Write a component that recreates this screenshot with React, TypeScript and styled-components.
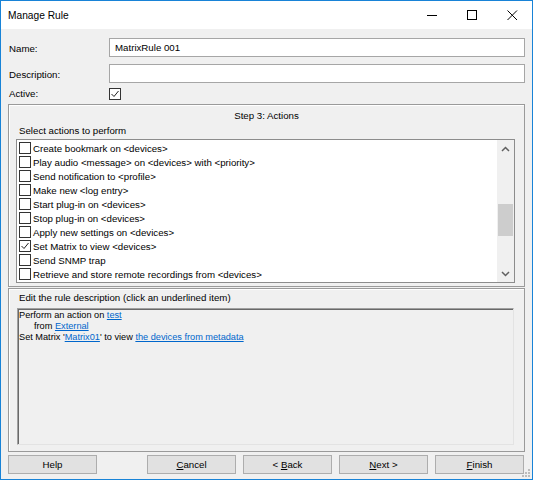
import React from "react";
import styled, { createGlobalStyle } from "styled-components";

const Global = createGlobalStyle`
  html, body { margin: 0; padding: 0; background: #ffffff; }
  body { font-family: "Liberation Sans", Arial, sans-serif; font-size: 9.7px; color: #000; }
  * { box-sizing: border-box; }
`;

const Window = styled.div`
  position: relative;
  width: 533px;
  height: 480px;
  border: 1px solid #1883d7;
  background: #f0f0f0;
  display: flex;
  flex-direction: column;
`;

const TitleBar = styled.div`
  height: 28px;
  background: #ffffff;
  display: flex;
  align-items: center;
  padding-left: 7px;
  flex-shrink: 0;
`;

const Title = styled.div`
  font-size: 10.2px;
  flex: 1;
`;

const Controls = styled.div`
  display: flex;
  height: 100%;
`;

const CtrlBtn = styled.div`
  width: 40px;
  height: 100%;
  display: flex;
  align-items: center;
  justify-content: center;
`;

const Body = styled.div`
  flex: 1;
  display: flex;
  flex-direction: column;
  padding: 9px 7px 0 7px;
`;

const FormRow = styled.div<{ $h: number; $mt: number }>`
  display: grid;
  grid-template-columns: 101px 1fr;
  height: ${(p) => p.$h}px;
  margin-top: ${(p) => p.$mt}px;
  align-items: center;
  flex-shrink: 0;
`;

const Label = styled.div<{ $shift?: number }>`
  padding-left: 1px;
  padding-top: ${(p) => p.$shift ?? 3}px;
  line-height: 12px;
`;

const TextInput = styled.div`
  height: 19px;
  background: #ffffff;
  border: 1px solid #a6a6a6;
  padding: 0 5px;
  display: flex;
  align-items: center;
`;

const Box = styled.div<{ $checked?: boolean }>`
  width: 12px;
  height: 12px;
  border: 1px solid #333333;
  background: #ffffff;
  display: flex;
  align-items: center;
  justify-content: center;
  flex-shrink: 0;
`;

const Group = styled.div<{ $h: number; $mt: number }>`
  height: ${(p) => p.$h}px;
  margin-top: ${(p) => p.$mt}px;
  border: 1px solid #9a9a9a;
  box-shadow: inset 1px 1px 0 #ffffff;
  display: flex;
  flex-direction: column;
  flex-shrink: 0;
`;

const GroupTitle = styled.div`
  text-align: center;
  height: 19px;
  line-height: 12px;
  padding-top: 5px;
`;

const SubTitle = styled.div<{ $h: number; $pt: number }>`
  padding-left: 10px;
  height: ${(p) => p.$h}px;
  padding-top: ${(p) => p.$pt}px;
  line-height: 12px;
`;

const ListBox = styled.div`
  margin: 0 9px 3px 7px;
  flex: 1;
  background: #ffffff;
  border: 1px solid #8c8c8c;
  display: flex;
  overflow: hidden;
`;

const Items = styled.div`
  flex: 1;
  padding: 1px 0 0 2px;
  display: flex;
  flex-direction: column;
`;

const Item = styled.div`
  height: 14px;
  display: flex;
  align-items: center;
  gap: 2px;
  white-space: nowrap;
`;

const ScrollBar = styled.div`
  width: 17px;
  background: #f0f0f0;
  display: flex;
  flex-direction: column;
`;

const Arrow = styled.div`
  height: 17px;
  display: flex;
  align-items: center;
  justify-content: center;
`;

const Track = styled.div`
  flex: 1;
  display: flex;
  flex-direction: column;
  padding: 0 1px;
`;

const Thumb = styled.div<{ $top: number; $h: number }>`
  margin-top: ${(p) => p.$top}px;
  height: ${(p) => p.$h}px;
  background: #cdcdcd;
`;

const DescArea = styled.div`
  margin: 0 10px 6px 8px;
  flex: 1;
  border: 1px solid #a0a0a0;
  border-right-color: #e3e3e3;
  border-bottom-color: #e3e3e3;
  box-shadow: inset 1px 1px 0 #696969;
  padding: 1px 1px;
  font-size: 9.2px;
  line-height: 11px;
`;

const Line = styled.div<{ $indent?: number }>`
  padding-left: ${(p) => p.$indent ?? 0}px;
  white-space: nowrap;
`;

const Link = styled.span`
  color: #0066cc;
  text-decoration: underline;
`;

const ButtonRow = styled.div`
  display: flex;
  gap: 7px;
  padding-top: 3px;
`;

const Button = styled.div<{ $gapAfter?: number }>`
  width: 89px;
  height: 19px;
  background: #e1e1e1;
  border: 1px solid #adadad;
  display: flex;
  align-items: center;
  justify-content: center;
  white-space: pre;
  margin-right: ${(p) => p.$gapAfter ?? 0}px;
`;

const Grip = styled.svg`
  position: absolute;
  right: 1px;
  bottom: 1px;
`;

const Check = () => (
  <svg width="10" height="10" viewBox="0 0 10 10">
    <path d="M1.5 5 L4 7.5 L8.5 2" fill="none" stroke="#222" strokeWidth="1" />
  </svg>
);

const CheckBox = ({ checked }: { checked?: boolean }) => (
  <Box $checked={checked}>{checked ? <Check /> : null}</Box>
);

const actions: { text: string; checked?: boolean }[] = [
  { text: "Create bookmark on <devices>" },
  { text: "Play audio <message> on <devices> with <priority>" },
  { text: "Send notification to <profile>" },
  { text: "Make new <log entry>" },
  { text: "Start plug-in on <devices>" },
  { text: "Stop plug-in on <devices>" },
  { text: "Apply new settings on <devices>" },
  { text: "Set Matrix to view <devices>", checked: true },
  { text: "Send SNMP trap" },
  { text: "Retrieve and store remote recordings from <devices>" },
];

export default function App() {
  return (
    <>
      <Global />
      <Window>
        <TitleBar>
          <Title>Manage Rule</Title>
          <Controls>
            <CtrlBtn>
              <svg width="11" height="11" viewBox="0 0 11 11">
                <path d="M0 5.5 H10" stroke="#000" strokeWidth="1" />
              </svg>
            </CtrlBtn>
            <CtrlBtn>
              <svg width="11" height="11" viewBox="0 0 11 11">
                <rect x="0.5" y="0.5" width="9" height="9" fill="none" stroke="#000" strokeWidth="1" />
              </svg>
            </CtrlBtn>
            <CtrlBtn>
              <svg width="11" height="11" viewBox="0 0 11 11">
                <path d="M0.5 0.5 L10 10 M10 0.5 L0.5 10" stroke="#000" strokeWidth="1" />
              </svg>
            </CtrlBtn>
          </Controls>
        </TitleBar>
        <Body>
          <FormRow $h={19} $mt={0}>
            <Label>Name:</Label>
            <TextInput>MatrixRule 001</TextInput>
          </FormRow>
          <FormRow $h={19} $mt={7}>
            <Label>Description:</Label>
            <TextInput />
          </FormRow>
          <FormRow $h={12} $mt={4}>
            <Label $shift={1}>Active:</Label>
            <CheckBox checked />
          </FormRow>
          <Group $h={183} $mt={5}>
            <GroupTitle>Step 3: Actions</GroupTitle>
            <SubTitle $h={15} $pt={1}>
              Select actions to perform
            </SubTitle>
            <ListBox>
              <Items>
                {actions.map((a) => (
                  <Item key={a.text}>
                    <CheckBox checked={a.checked} />
                    <span>{a.text}</span>
                  </Item>
                ))}
              </Items>
              <ScrollBar>
                <Arrow>
                  <svg width="9" height="6" viewBox="0 0 9 6">
                    <path d="M1 5 L4.5 1.5 L8 5" fill="none" stroke="#606060" strokeWidth="1.5" />
                  </svg>
                </Arrow>
                <Track>
                  <Thumb $top={47} $h={32} />
                </Track>
                <Arrow>
                  <svg width="9" height="6" viewBox="0 0 9 6">
                    <path d="M1 1 L4.5 4.5 L8 1" fill="none" stroke="#606060" strokeWidth="1.5" />
                  </svg>
                </Arrow>
              </ScrollBar>
            </ListBox>
          </Group>
          <Group $h={164} $mt={1}>
            <SubTitle $h={19} $pt={3}>
              Edit the rule description (click an underlined item)
            </SubTitle>
            <DescArea>
              <Line>
                Perform an action on <Link>test</Link>
              </Line>
              <Line $indent={15}>
                from <Link>External</Link>
              </Line>
              <Line>
                Set Matrix '<Link>Matrix01</Link>' to view <Link>the devices from metadata</Link>
              </Line>
            </DescArea>
          </Group>
          <ButtonRow>
            <Button $gapAfter={43}>Help</Button>
            <Button>
              <u>C</u>ancel
            </Button>
            <Button>
              {"< "}
              <u>B</u>ack
            </Button>
            <Button>
              <u>N</u>
              {"ext >"}
            </Button>
            <Button>
              <u>F</u>inish
            </Button>
          </ButtonRow>
        </Body>
        <Grip width="10" height="10" viewBox="0 0 10 10">
          {[
            [8, 2],
            [8, 5],
            [5, 5],
            [8, 8],
            [5, 8],
            [2, 8],
          ].map(([x, y]) => (
            <rect key={`${x}-${y}`} x={x - 1} y={y - 1} width="2" height="2" fill="#bcbcbc" />
          ))}
        </Grip>
      </Window>
    </>
  );
}
